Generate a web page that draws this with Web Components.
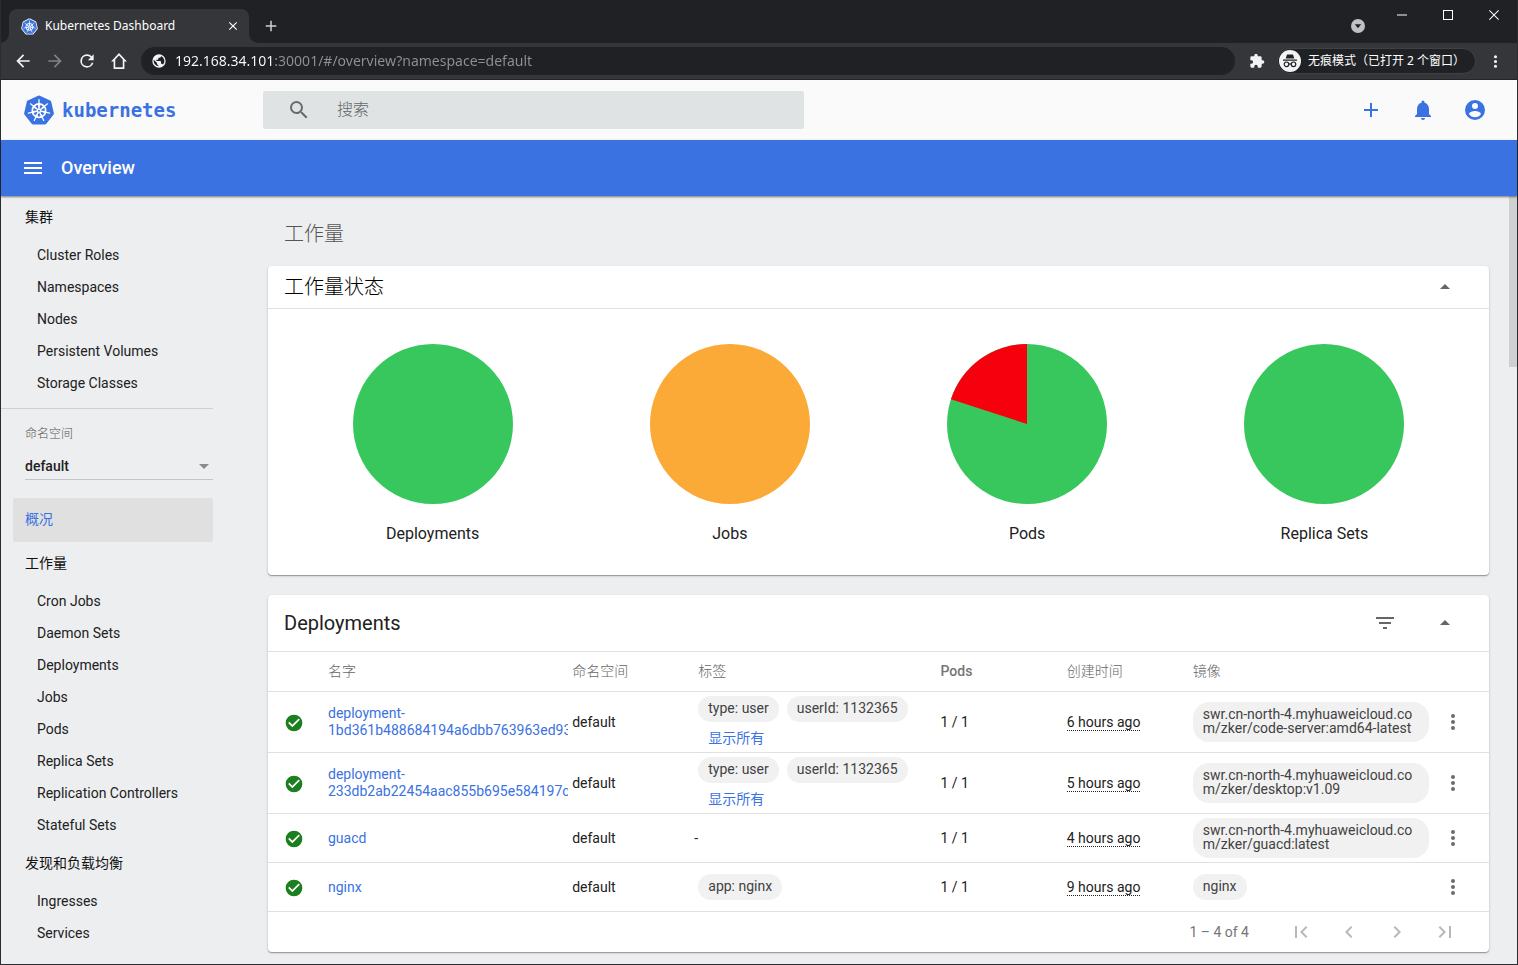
<!DOCTYPE html>
<html lang="zh-CN">
<head>
<meta charset="utf-8">
<title>Kubernetes Dashboard</title>
<style>
html, body { margin: 0; height: 100%; }
body {
  font-family: Roboto, "Noto Sans CJK SC", sans-serif;
  font-size: 14px;
  color: #212121;
  overflow: hidden;
  --primary: #3a72e1;
  --muted: #757575;
  --line: #e0e0e0;
  --ui: "Noto Sans", "Noto Sans CJK SC", sans-serif;
}
</style>
</head>
<body>
<browser-window></browser-window>

<script>
const P = {
  back: 'M20 11H7.8l5.6-5.6L12 4l-8 8 8 8 1.4-1.4L7.8 13H20v-2z',
  forward: 'M12 4l-1.4 1.4 5.6 5.6H4v2h12.200l-5.600 5.600L12 20l8-8z',
  reload: 'M17.65 6.35A7.95 7.95 0 0 0 12 4a8 8 0 1 0 7.73 10h-2.080A6 6 0 1 1 12 6c1.660 0 3.140.690 4.220 1.780L13 11h7V4l-2.350 2.350z',
  home: 'M12 2.500L2.500 12.500h3V21.500h13V12.500h3L12 2.500zM7.500 19.500v-9.200L12 5.500l4.500 4.800v9.200z',
  puzzle: 'M20.500 11H19V7a2 2 0 0 0-2-2h-4V3.500a2.500 2.500 0 0 0-5 0V5H4a2 2 0 0 0-2 2v3.800h1.500a2.700 2.700 0 0 1 0 5.400H2V20a2 2 0 0 0 2 2h3.800v-1.500a2.700 2.700 0 0 1 5.400 0V22H17a2 2 0 0 0 2-2v-4h1.500a2.500 2.500 0 0 0 0-5z',
  globe: 'M12 2a10 10 0 1 0 0 20 10 10 0 0 0 0-20zM11 19.900A8 8 0 0 1 4.200 10.200L9 15v1a2 2 0 0 0 2 2zM17.900 17.400A2 2 0 0 0 16 16h-1v-3a1 1 0 0 0-1-1H8v-2h2a1 1 0 0 0 1-1V7h2a2 2 0 0 0 2-2v-.4a8 8 0 0 1 2.900 12.800z',
  more: 'M12 8a2 2 0 1 0 0-4 2 2 0 0 0 0 4zm0 2a2 2 0 1 0 0 4 2 2 0 0 0 0-4zm0 6a2 2 0 1 0 0 4 2 2 0 0 0 0-4z',
  search: 'M15.500 14h-.79l-.28-.27A6.470 6.470 0 0 0 16 9.500 6.500 6.500 0 1 0 9.500 16c1.610 0 3.090-.59 4.230-1.570l.27.28v.79l5 4.990L20.490 19l-4.990-5zm-6 0a4.500 4.500 0 1 1 0-9 4.500 4.500 0 0 1 0 9z',
  add: 'M19 13h-6v6h-2v-6H5v-2h6V5h2v6h6v2z',
  plus: 'M19 13h-6v6h-2v-6H5v-2h6V5h2v6h6v2z',
  bell: 'M12 22a2 2 0 0 0 2-2h-4a2 2 0 0 0 2 2zm6-6v-5c0-3.070-1.640-5.640-4.500-6.320V4a1.500 1.500 0 0 0-3 0v.68C7.630 5.360 6 7.920 6 11v5l-2 2v1h16v-1l-2-2z',
  account: 'M12 2a10 10 0 1 0 0 20 10 10 0 0 0 0-20zm0 3a3 3 0 1 1 0 6 3 3 0 0 1 0-6zm0 14.200A7.200 7.200 0 0 1 6 16c.03-1.990 4-3.080 6-3.080s5.970 1.090 6 3.080a7.200 7.200 0 0 1-6 3.200z',
  menu: 'M3 18h18v-2H3v2zm0-5h18v-2H3v2zm0-7v2h18V6H3z',
  up: 'M7 14l5-5 5 5z',
  down: 'M7 10l5 5 5-5z',
  filter: 'M10 18h4v-2h-4v2zM3 6v2h18V6H3zm3 7h12v-2H6v2z',
  check: 'M12 2a10 10 0 1 0 0 20 10 10 0 0 0 0-20zm-2 15l-5-5 1.410-1.410L10 14.170l7.590-7.590L19 8l-9 9z',
  first: 'M18.410 16.590L13.820 12l4.590-4.590L17 6l-6 6 6 6zM6 6h2v12H6z',
  prev: 'M15.410 7.410L14 6l-6 6 6 6 1.410-1.410L10.830 12z',
  next: 'M10 6L8.590 7.410 13.170 12l-4.580 4.590L10 18l6-6z',
  last: 'M5.590 7.410L10.180 12l-4.590 4.590L7 18l6-6-6-6zM16 6h2v12h-2z',
  close: 'M19 6.400L17.600 5 12 10.600 6.400 5 5 6.400l5.600 5.600L5 17.600 6.400 19l5.600-5.600 5.600 5.600 1.400-1.400-5.600-5.600z',
  winmin: 'M0 10.800h24v2.400H0z',
  winmax: 'M0 0h24v24H0zM2.400 2.400v19.200h19.200V2.400z',
  winclose: 'M1.700 0L0 1.700 10.300 12 0 22.300 1.700 24 12 13.700 22.300 24l1.700-1.700L13.700 12 24 1.700 22.300 0 12 10.300z',
  caret: 'M12 0a12 12 0 1 0 0 24 12 12 0 0 0 0-24zM6.500 9h11L12 16z'
};

function define(name, html, setup) {
  const tpl = document.createElement('template');
  tpl.innerHTML = html;
  customElements.define(name, class extends HTMLElement {
    constructor() {
      super();
      this.attachShadow({ mode: 'open' });
    }
    connectedCallback() {
      if (this.shadowRoot.firstChild) return;
      this.shadowRoot.append(tpl.content.cloneNode(true));
      if (setup) setup(this, this.shadowRoot);
    }
  });
}

/* One glyph of the icon set; its size comes from the "size" attribute. */
define('ui-icon', `
<style>
:host { display: inline-flex; flex: none; width: 24px; height: 24px; }
svg { width: 100%; height: 100%; fill: currentColor; }
</style>
<svg viewBox="0 0 24 24" aria-hidden="true"><path fill-rule="evenodd"/></svg>`,
(el, root) => {
  root.querySelector('path').setAttribute('d', P[el.getAttribute('name')]);
  const s = el.getAttribute('size');
  if (s) { el.style.width = s + 'px'; el.style.height = s + 'px'; }
});

/* A button that holds one icon. */
define('icon-button', `
<style>
:host { display: inline-flex; flex: none; }
button { all: unset; display: flex; cursor: pointer; }
</style>
<button type="button"><slot></slot></button>`,
(el, root) => root.querySelector('button').setAttribute('aria-label', el.getAttribute('label') || ''));

/* Ship's wheel on a rounded heptagon. */
define('kube-mark', `
<style>
:host { display: inline-flex; flex: none; width: 32px; height: 32px; }
svg { width: 100%; height: 100%; }
</style>
<svg viewBox="-50 -50 100 100" aria-hidden="true"></svg>`,
(el, root) => {
  const pt = (r, a) => [(r * Math.sin(a)).toFixed(2), (-r * Math.cos(a)).toFixed(2)];
  const T = Math.PI * 2 / 7;
  let hept = '', wheel = '';
  for (let i = 0; i < 7; i++) {
    hept += pt(41, i * T).join() + ' ';
    const a = pt(7, i * T), b = pt(34, i * T);
    const l = pt(19, i * T - 0.16), r = pt(19, i * T + 0.16);
    wheel += '<path d="M' + a + 'L' + b + '" stroke-width="4"/>' +
      '<path d="M' + a + 'L' + l + 'L' + r + 'Z" stroke-width="1" fill="#fff"/>';
  }
  const edge = el.hasAttribute('outlined')
    ? '<polygon points="' + hept + '" transform="translate(0 2)" fill="#fff" stroke="#fff" stroke-width="17" stroke-linejoin="round"/>' : '';
  const body = el.hasAttribute('outlined') ? 8 : 13;
  root.querySelector('svg').innerHTML = edge +
    '<g transform="translate(0 2)"><polygon points="' + hept + '" fill="#3a72e1" stroke="#3a72e1" stroke-width="' + body + '" stroke-linejoin="round"/>' +
    '<g stroke="#fff" fill="none" stroke-linecap="round"><circle r="21" stroke-width="5"/>' + wheel + '</g>' +
    '<circle r="7" fill="#fff"/><circle r="3" fill="#3a72e1"/></g>';
});

define('tab-strip', `
<style>
:host { display: flex; height: 43px; background: #202124; color: #fff; font: 12px/16px var(--ui); }
.tab { position: relative; display: flex; align-items: center; gap: 7px; width: 240px; height: 34px; box-sizing: border-box;
  margin: 9px 0 0 8px; padding: 0 9px 0 12px; background: #35363a; border-radius: 8px 8px 0 0; }
.tab::before, .tab::after { content: ""; position: absolute; bottom: 0; width: 8px; height: 8px; }
.tab::before { left: -8px; background: radial-gradient(circle at 0 0, transparent 7px, #35363a 8px); }
.tab::after { right: -8px; background: radial-gradient(circle at 100% 0, transparent 7px, #35363a 8px); }
.tab span { flex: 1; white-space: nowrap; }
.new { margin: 17px 0 0 13px; color: #cfd1d4; }
.win { display: flex; margin: 10px 18px 0 auto; gap: 36px; }
.drop { margin-top: 9px; margin-right: -4px; color: #bdc1c6; }
</style>
<div class="tab"><kube-mark style="width:17px;height:17px" outlined></kube-mark><span>Kubernetes Dashboard</span>
<icon-button label="关闭标签页"><ui-icon name="close" size="14"></ui-icon></icon-button></div>
<icon-button class="new" label="新标签页"><ui-icon name="plus" size="18"></ui-icon></icon-button>
<div class="win">
<icon-button class="drop" label="搜索标签页"><ui-icon name="caret" size="14"></ui-icon></icon-button>
<icon-button label="最小化"><ui-icon name="winmin" size="10"></ui-icon></icon-button>
<icon-button label="最大化"><ui-icon name="winmax" size="10"></ui-icon></icon-button>
<icon-button label="关闭"><ui-icon name="winclose" size="10"></ui-icon></icon-button>
</div>`);

define('address-bar', `
<style>
:host { display: flex; align-items: center; height: 36px; padding: 0 12px; background: #35363a;
  color: #f1f3f4; border-bottom: 1px solid #232427; font: 12px/16px var(--ui); }
.nav { display: flex; gap: 12px; margin-right: 12px; }
.off { color: #808287; }
.box { flex: 1; display: flex; align-items: center; gap: 8px; height: 28px; padding: 0 10px; border-radius: 14px; background: #202124; }
input { all: unset; flex: 1; font: 14px/20px var(--ui); color: #9aa0a6; -webkit-text-fill-color: transparent;
  background: linear-gradient(90deg, #fff 100px, #8d9196 100px); -webkit-background-clip: text; background-clip: text; }
.ext { margin: 0 12px 0 14px; }
.incog { display: flex; align-items: center; gap: 7px; height: 24px; padding: 0 10px 0 1px; border: 1px solid #3f4145; border-radius: 14px; background: #202124; color: #fff; }
.incog svg { width: 22px; height: 22px; }
.dots { margin-left: 10px; }
</style>
<div class="nav">
<icon-button label="后退"><ui-icon name="back" size="20"></ui-icon></icon-button>
<icon-button class="off" label="前进"><ui-icon name="forward" size="20"></ui-icon></icon-button>
<icon-button label="重新加载"><ui-icon name="reload" size="20"></ui-icon></icon-button>
<icon-button label="主页"><ui-icon name="home" size="20"></ui-icon></icon-button>
</div>
<div class="box"><ui-icon name="globe" size="16"></ui-icon><input type="text" aria-label="地址" value="192.168.34.101:30001/#/overview?namespace=default"></div>
<icon-button class="ext" label="扩展程序"><ui-icon name="puzzle" size="16"></ui-icon></icon-button>
<div class="incog"><svg viewBox="0 0 22 22" aria-hidden="true"><circle cx="11" cy="11" r="11" fill="#f1f3f4"/>
<path d="M8 4.500h6l1.300 4H6.700zM4 9.500h14v1.200H4z" fill="#202124"/>
<g fill="none" stroke="#202124" stroke-width="1.200"><circle cx="7.500" cy="14.300" r="2.300"/><circle cx="14.500" cy="14.300" r="2.300"/><path d="M9.800 14h2.400"/></g></svg>
<span>无痕模式（已打开 2 个窗口）</span></div>
<icon-button class="dots" label="菜单"><ui-icon name="more" size="19"></ui-icon></icon-button>`);

define('app-header', `
<style>
:host { display: flex; align-items: center; height: 60px; background: #fafafa; padding: 0 32px 0 22px; color: var(--primary); }
.logo { display: flex; align-items: center; gap: 7px; width: 240px; color: inherit; text-decoration: none; }
.logo span { font: bold 19px/24px "DejaVu Sans Mono", monospace; }
.search { display: flex; align-items: center; gap: 26px; flex: 0 1 541px; height: 38px; box-sizing: border-box; padding: 0 24px;
  background: #dfe3e4; border-radius: 2px; color: #6a6a6a; }
input { all: unset; flex: 1; font: 300 16px/24px Roboto, "Noto Sans CJK SC", sans-serif; color: #424242; }
input::placeholder { color: #666; }
.acts { display: flex; gap: 28px; margin-left: auto; margin-right: -2px; }
</style>
<a class="logo" href="#/overview"><kube-mark></kube-mark><span>kubernetes</span></a>
<label class="search"><ui-icon name="search"></ui-icon><input type="search" placeholder="搜索" aria-label="搜索"></label>
<div class="acts">
<icon-button label="创建"><ui-icon name="add"></ui-icon></icon-button>
<icon-button label="通知"><ui-icon name="bell"></ui-icon></icon-button>
<icon-button label="用户"><ui-icon name="account"></ui-icon></icon-button>
</div>`);

define('title-bar', `
<style>
:host { display: flex; align-items: center; gap: 16px; height: 56px; padding: 0 20px; background: var(--primary); color: #fff;
  box-shadow: 0 1px 2px rgba(0,0,0,.5); position: relative; }
h1 { margin: 0; font: 500 18px/24px Roboto, sans-serif; }
</style>
<icon-button label="导航"><ui-icon name="menu"></ui-icon></icon-button><h1>Overview</h1>`);

/* A titled list of links; the links are slotted in. */
define('nav-group', `
<style>
:host { display: block; }
h2 { margin: 0; padding-left: 24px; font: 400 14px/42px Roboto, "Noto Sans CJK SC", sans-serif; height: 44px; color: #111; }
::slotted(a) { display: block; padding-left: 36px; height: 32px; line-height: 30px; color: #212121; text-decoration: none; }
</style>
<h2></h2><slot></slot>`,
(el, root) => { root.querySelector('h2').textContent = el.getAttribute('heading'); });

define('side-nav', `
<style>
:host { display: block; width: 212px; flex: none; }
hr { margin: 8px 0 0; border: 0; border-top: 1px solid #cfd0d2; }
.ns { display: block; padding: 17px 0 18px 24px; }
label { display: block; font: 300 12px/16px Roboto, "Noto Sans CJK SC", sans-serif; color: #555; }
.field { display: grid; align-items: center; margin-top: 11px; border-bottom: 1px solid #c4c5c7; }
.field > * { grid-area: 1 / 1; }
select { all: unset; font: 500 14px/26px Roboto, sans-serif; color: #212121; }
.field ui-icon { justify-self: end; color: #8a8a8a; margin-right: -3px; pointer-events: none; }
.active { display: block; margin-left: 12px; padding-left: 12px; height: 44px; line-height: 42px; border-radius: 2px;
  background: #e0e0e0; color: var(--primary); text-decoration: none; }
</style>
<nav-group heading="集群"><a href="#/clusterrole">Cluster Roles</a><a href="#/namespace">Namespaces</a><a href="#/node">Nodes</a><a href="#/persistentvolume">Persistent Volumes</a><a href="#/storageclass">Storage Classes</a></nav-group>
<hr>
<div class="ns"><label for="ns">命名空间</label><div class="field"><select id="ns"><option>default</option></select><ui-icon name="down"></ui-icon></div></div>
<a class="active" href="#/overview">概况</a>
<nav-group heading="工作量"><a href="#/cronjob">Cron Jobs</a><a href="#/daemonset">Daemon Sets</a><a href="#/deployment">Deployments</a><a href="#/job">Jobs</a><a href="#/pod">Pods</a><a href="#/replicaset">Replica Sets</a><a href="#/replicationcontroller">Replication Controllers</a><a href="#/statefulset">Stateful Sets</a></nav-group>
<nav-group heading="发现和负载均衡"><a href="#/ingress">Ingresses</a><a href="#/service">Services</a></nav-group>`);

/* White panel with a heading row; body goes into the default slot. */
define('content-card', `
<style>
:host { display: block; background: #fff; border-radius: 4px; margin-bottom: 20px;
  box-shadow: 0 1px 1px rgba(0,0,0,.3), 0 1px 3px rgba(0,0,0,.14); }
header { display: flex; align-items: center; gap: 36px; height: var(--head, 56px); padding: 0 32px 0 16px;
  border-bottom: 1px solid var(--line); color: #666; }
h2 { flex: 1; margin: 0; font: 400 20px/28px Roboto, "Noto Sans CJK SC", sans-serif; color: #212121; }
:host([light]) h2 { font-weight: 300; color: #000; }
</style>
<header><h2></h2><slot name="tools"></slot><icon-button label="收起"><ui-icon name="up"></ui-icon></icon-button></header>
<slot></slot>`,
(el, root) => { root.querySelector('h2').textContent = el.getAttribute('heading'); });

/* Pie of one workload kind; "failed" is the failing share in percent. */
define('status-pie', `
<style>
:host { flex: 1; display: flex; flex-direction: column; align-items: center; gap: 18px; font-size: 16px; line-height: 24px; }
svg { width: 160px; height: 160px; }
</style>
<svg viewBox="-80 -80 160 160" aria-hidden="true"><circle r="80"/><path fill="#f7000e"/></svg><span><slot></slot></span>`,
(el, root) => {
  root.querySelector('circle').setAttribute('fill', el.getAttribute('color') || '#38c75d');
  const f = +el.getAttribute('failed') / 100;
  if (f) {
    const a = -f * 2 * Math.PI;
    root.querySelector('path').setAttribute('d', 'M0 0V-80A80 80 0 0 0 ' + 80 * Math.sin(a) + ' ' + -80 * Math.cos(a) + 'Z');
  }
});

define('label-chip', `
<style>
:host { display: inline-block; box-sizing: border-box; max-width: 236px; padding: 5px 10px 7px; border-radius: 16px; background: #f1f1f1; color: #424242;
  line-height: 14px; word-break: break-all; vertical-align: top; }
</style><slot></slot>`);

define('deployment-table', `
<style>
:host { display: block; }
table { width: 100%; table-layout: fixed; border-collapse: separate; border-spacing: 0; }
th, td { padding: 0; text-align: left; border-bottom: 1px solid var(--line); font-weight: 400; line-height: 17px; vertical-align: middle; }
th { height: 39px; color: #666; font-weight: 300; }
th.pods { font-weight: 500; color: var(--muted); }
td { height: 48px; }
tr.tall td { height: 60px; }
.s { width: 60px; } .m { width: 56px; } .w2 { width: 20%; } .w1 { width: 10%; }
td.s ui-icon { color: #1b7f1f; margin: 2px 0 0 16px; vertical-align: middle; }
td.m icon-button { color: #6b6b6b; margin-left: 8px; vertical-align: middle; }
.inset { margin-left: 4px; }
.pods span { margin-left: 2px; }
a { color: var(--primary); text-decoration: none; }
td.n a { display: block; width: 240px; overflow: hidden; }
.chips { display: flex; gap: 8px; }
.all { display: block; margin: 8px 0 2px 10px; }
abbr { text-decoration: none; border-bottom: 1px dotted #212121; line-height: 15px; display: inline-block; }
.foot { display: flex; justify-content: flex-end; align-items: center; height: 40px; gap: 24px; padding-right: 32px; color: var(--muted); }
.foot span { margin-right: 16px; }
.foot icon-button { color: #b8b8b8; }
</style>
<table>
<thead><tr><th class="s"></th><th class="w2">名字</th><th class="w1">命名空间</th><th class="w2"><div class="inset">标签</div></th><th class="pods"><span>Pods</span></th><th class="w1">创建时间</th><th class="w2"><div class="inset">镜像</div></th><th class="m"></th></tr></thead>
<tbody></tbody></table>
<div class="foot"><span>1 – 4 of 4</span>
<icon-button label="首页"><ui-icon name="first"></ui-icon></icon-button><icon-button label="上一页"><ui-icon name="prev"></ui-icon></icon-button>
<icon-button label="下一页"><ui-icon name="next"></ui-icon></icon-button><icon-button label="末页"><ui-icon name="last"></ui-icon></icon-button></div>`,
(el, root) => {
  const repo = 'swr.cn-north-4.myhuaweicloud.com/zker/';
  const rows = [
    ['deployment-1bd361b488684194a6dbb763963ed93', ['type: user', 'userId: 1132365'], 6, repo + 'code-server:amd64-latest', true],
    ['deployment-233db2ab22454aac855b695e584197c', ['type: user', 'userId: 1132365'], 5, repo + 'desktop:v1.09', true],
    ['guacd', [], 4, repo + 'guacd:latest', false],
    ['nginx', ['app: nginx'], 9, 'nginx', false]
  ];
  root.querySelector('tbody').innerHTML = rows.map(([name, labels, hours, image, tall]) => `
<tr class="${tall ? 'tall' : ''}"><td class="s"><ui-icon name="check" size="20"></ui-icon></td>
<td class="n"><a href="#/deployment/${name}">${name.replace('-', '-<wbr>')}</a></td><td>default</td>
<td>${labels.length
    ? '<div class="inset"><div class="chips">' + labels.map(l => '<label-chip>' + l + '</label-chip>').join('') + '</div>'
      + (tall ? '<a class="all" href="#/labels">显示所有</a>' : '') + '</div>' : '-'}</td>
<td class="pods"><span>1 / 1</span></td><td><abbr>${hours} hours ago</abbr></td>
<td><div class="inset"><label-chip>${image}</label-chip></div></td>
<td class="m"><icon-button label="操作"><ui-icon name="more"></ui-icon></icon-button></td></tr>`).join('');
});

define('overview-page', `
<style>
:host { flex: 1; min-width: 0; display: block; padding: 24px 20px 0 55px; }
h2 { margin: 0 0 18px 16px; font: 300 20px/28px Roboto, "Noto Sans CJK SC", sans-serif; color: #555; }
.status { --head: 42px; }
.pies { display: flex; padding: 35px 16px 29px; }
</style>
<h2>工作量</h2>
<content-card class="status" heading="工作量状态" light><div class="pies">
<status-pie>Deployments</status-pie><status-pie color="#fbaa38">Jobs</status-pie><status-pie failed="20">Pods</status-pie><status-pie>Replica Sets</status-pie></div></content-card>
<content-card heading="Deployments"><icon-button slot="tools" label="筛选"><ui-icon name="filter"></ui-icon></icon-button>
<deployment-table></deployment-table></content-card>`);

define('browser-window', `
<style>
:host { display: flex; flex-direction: column; height: 100vh; box-sizing: border-box; border: solid #2b2c2f; border-width: 0 1px 1px; background: #edeef0; }
tab-strip, address-bar, app-header, title-bar { flex: none; }
main { flex: 1; min-height: 0; display: flex; overflow: hidden; }
.thumb { flex: none; width: 8px; height: 171px; background: #cfd0d2; }
</style>
<tab-strip></tab-strip><address-bar></address-bar><app-header></app-header><title-bar></title-bar>
<main><side-nav></side-nav><overview-page></overview-page><div class="thumb"></div></main>`);
</script>
</body>
</html>
